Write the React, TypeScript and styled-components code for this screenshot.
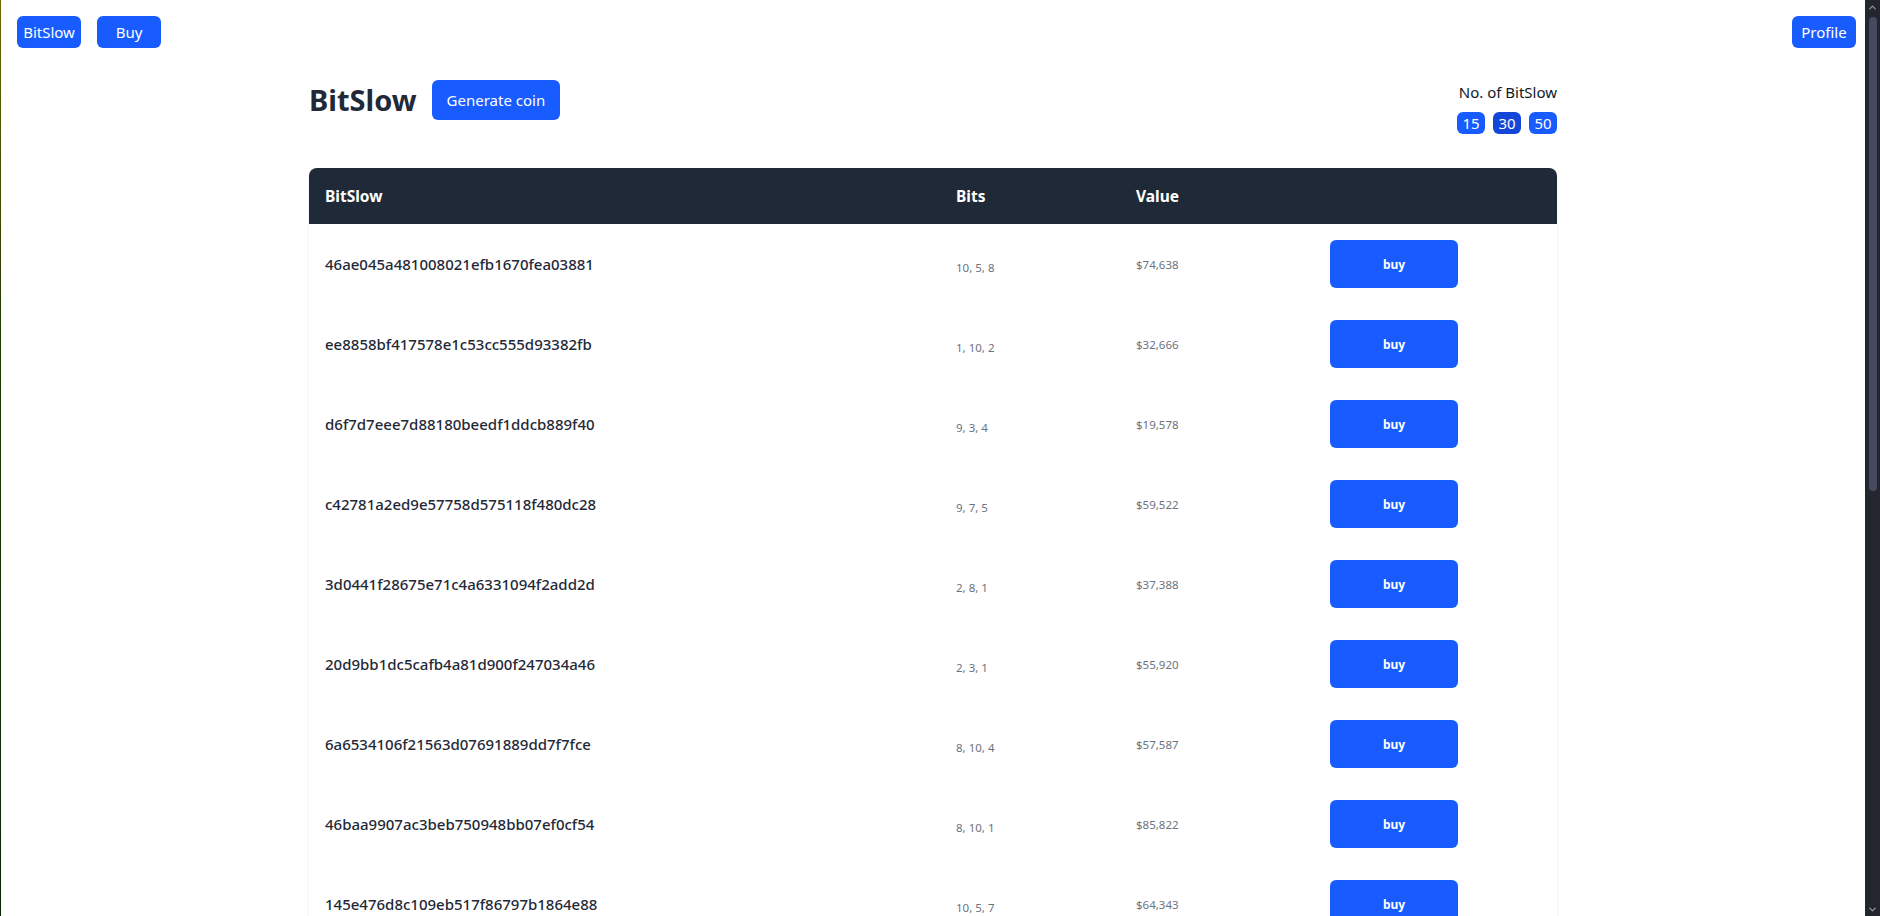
import React from "react";
import styled, { createGlobalStyle } from "styled-components";
import { ChevronUp, ChevronDown } from "lucide-react";

const GlobalStyle = createGlobalStyle`
  html, body { margin: 0; height: 100%; overflow: hidden; background: #ffffff; }
  body {
    font-family: "Noto Sans", "Open Sans", Arial, sans-serif;
    color: #111827;
  }
  * { box-sizing: border-box; }
`;

const Shell = styled.div`
  display: flex;
  height: 100vh;
  border-left: 1px solid #1c2a05;
  border-image: linear-gradient(to bottom, #6b6b00 0%, #233a00 35%, #0c2008 100%) 1;
`;

const Viewport = styled.div`
  flex: 1;
  min-width: 0;
  height: 100%;
  overflow: hidden;
`;

const Scrollbar = styled.div`
  width: 15px;
  flex: none;
  background: #23252f;
  display: flex;
  flex-direction: column;
  align-items: center;
  color: #9a9cab;
`;

const ArrowSlot = styled.div`
  height: 14px;
  display: flex;
  align-items: center;
  justify-content: center;
`;

const Track = styled.div`
  flex: 1;
  width: 100%;
  display: flex;
  justify-content: center;
  padding-top: 3px;
`;

const Thumb = styled.div`
  width: 8px;
  height: 474px;
  border-radius: 4px;
  background: #474a5e;
`;

const Page = styled.div`
  padding-bottom: 40px;
`;

const Nav = styled.nav`
  display: flex;
  justify-content: space-between;
  align-items: center;
  padding: 16px 9px 0 16px;
`;

const NavGroup = styled.div`
  display: flex;
  gap: 16px;
`;

const NavButton = styled.button`
  height: 32px;
  width: 64px;
  padding: 0;
  border: none;
  border-radius: 6px;
  background: #185cff;
  color: #ffffff;
  font-family: inherit;
  font-size: 15px;
  line-height: 32px;
  cursor: pointer;
`;

const Main = styled.main`
  max-width: 1280px;
  margin: 0 auto;
  padding: 32px 16px 0;
`;

const TopRow = styled.div`
  display: flex;
  justify-content: space-between;
  align-items: flex-start;
`;

const TitleGroup = styled.div`
  display: flex;
  align-items: center;
  gap: 15px;
  height: 40px;
`;

const Title = styled.h1`
  margin: 0;
  font-size: 29px;
  line-height: 36px;
  font-weight: 700;
  color: #1f2937;
`;

const PrimaryButton = styled.button`
  height: 40px;
  padding: 0 15px;
  border: none;
  border-radius: 6px;
  background: #185cff;
  color: #ffffff;
  font-family: inherit;
  font-size: 15px;
  cursor: pointer;
`;

const CountBox = styled.div`
  display: flex;
  flex-direction: column;
  align-items: flex-end;
  gap: 8px;
`;

const CountLabel = styled.div`
  font-size: 15px;
  line-height: 24px;
  color: #111827;
`;

const CountButtons = styled.div`
  display: flex;
  gap: 8px;
`;

const CountButton = styled.button<{ $active?: boolean }>`
  height: 22px;
  min-width: 28px;
  padding: 0 4px;
  border: none;
  border-radius: 6px;
  background: ${(p) => (p.$active ? "#1446d8" : "#185cff")};
  color: #ffffff;
  font-family: inherit;
  font-size: 15px;
  line-height: 22px;
  cursor: pointer;
`;

const Table = styled.div`
  margin-top: 34px;
  border-radius: 8px;
  overflow: hidden;
  box-shadow: 0 1px 3px rgba(0, 0, 0, 0.06), 0 1px 2px rgba(0, 0, 0, 0.04);
  background: #ffffff;
`;

const Grid = styled.div`
  display: grid;
  grid-template-columns: 631px 180px 194px 1fr;
  align-items: center;
`;

const HeadRow = styled(Grid)`
  height: 56px;
  background: #1f2937;
`;

const HeadCell = styled.div`
  padding: 0 16px;
  color: #ffffff;
  font-size: 15.5px;
  font-weight: 700;
  line-height: 24px;
`;

const Row = styled(Grid)`
  height: 80px;
`;

const HashCell = styled.div`
  padding: 0 16px;
  font-size: 15px;
  font-weight: 500;
  color: #1f2937;
  margin-top: -1px;
`;

const SmallCell = styled.div<{ $shift?: number }>`
  padding: 0 16px;
  font-size: 11.5px;
  color: #6b7280;
  margin-top: ${(p) => p.$shift ?? 0}px;
`;

const ActionCell = styled.div`
  padding: 0 16px;
`;

const BuyButton = styled.button`
  width: 128px;
  height: 48px;
  border: none;
  border-radius: 6px;
  background: #185cff;
  color: #ffffff;
  font-family: inherit;
  font-size: 12px;
  font-weight: 700;
  cursor: pointer;
`;

const coins = [
  { hash: "46ae045a481008021efb1670fea03881", bits: "10, 5, 8", value: "$74,638" },
  { hash: "ee8858bf417578e1c53cc555d93382fb", bits: "1, 10, 2", value: "$32,666" },
  { hash: "d6f7d7eee7d88180beedf1ddcb889f40", bits: "9, 3, 4", value: "$19,578" },
  { hash: "c42781a2ed9e57758d575118f480dc28", bits: "9, 7, 5", value: "$59,522" },
  { hash: "3d0441f28675e71c4a6331094f2add2d", bits: "2, 8, 1", value: "$37,388" },
  { hash: "20d9bb1dc5cafb4a81d900f247034a46", bits: "2, 3, 1", value: "$55,920" },
  { hash: "6a6534106f21563d07691889dd7f7fce", bits: "8, 10, 4", value: "$57,587" },
  { hash: "46baa9907ac3beb750948bb07ef0cf54", bits: "8, 10, 1", value: "$85,822" },
  { hash: "145e476d8c109eb517f86797b1864e88", bits: "10, 5, 7", value: "$64,343" },
  { hash: "8b21c0f7d94e3a5612bb07ee4c9d1f36", bits: "3, 6, 9", value: "$41,207" },
  { hash: "f03d9a7c51e2b8460d7a2c93e15bb4f0", bits: "7, 2, 6", value: "$28,915" },
  { hash: "5c7e12ab90d34f6e88a1b2c3d4e5f607", bits: "4, 9, 3", value: "$66,104" },
  { hash: "a91f3e0c7b5d28463e1f0a9b8c7d6e5f", bits: "6, 1, 10", value: "$12,873" },
  { hash: "0e4d6b2a8c1f3957e0a2b4c6d8e0f1a3", bits: "5, 4, 2", value: "$93,450" },
  { hash: "7d3c9e1b5a2f8406c1e3a5b7d9f0e2c4", bits: "1, 7, 8", value: "$48,261" },
];

export default function App() {
  return (
    <Shell>
      <GlobalStyle />
      <Viewport>
        <Page>
          <Nav>
            <NavGroup>
              <NavButton>BitSlow</NavButton>
              <NavButton>Buy</NavButton>
            </NavGroup>
            <NavButton>Profile</NavButton>
          </Nav>
          <Main>
            <TopRow>
              <TitleGroup>
                <Title>BitSlow</Title>
                <PrimaryButton>Generate coin</PrimaryButton>
              </TitleGroup>
              <CountBox>
                <CountLabel>No. of BitSlow</CountLabel>
                <CountButtons>
                  <CountButton>15</CountButton>
                  <CountButton $active>30</CountButton>
                  <CountButton>50</CountButton>
                </CountButtons>
              </CountBox>
            </TopRow>
            <Table>
              <HeadRow>
                <HeadCell>BitSlow</HeadCell>
                <HeadCell>Bits</HeadCell>
                <HeadCell>Value</HeadCell>
                <HeadCell />
              </HeadRow>
              {coins.map((c) => (
                <Row key={c.hash}>
                  <HashCell>{c.hash}</HashCell>
                  <SmallCell $shift={6}>{c.bits}</SmallCell>
                  <SmallCell>{c.value}</SmallCell>
                  <ActionCell>
                    <BuyButton>buy</BuyButton>
                  </ActionCell>
                </Row>
              ))}
            </Table>
          </Main>
        </Page>
      </Viewport>
      <Scrollbar>
        <ArrowSlot>
          <ChevronUp size={11} strokeWidth={2.5} />
        </ArrowSlot>
        <Track>
          <Thumb />
        </Track>
        <ArrowSlot>
          <ChevronDown size={11} strokeWidth={2.5} />
        </ArrowSlot>
      </Scrollbar>
    </Shell>
  );
}
